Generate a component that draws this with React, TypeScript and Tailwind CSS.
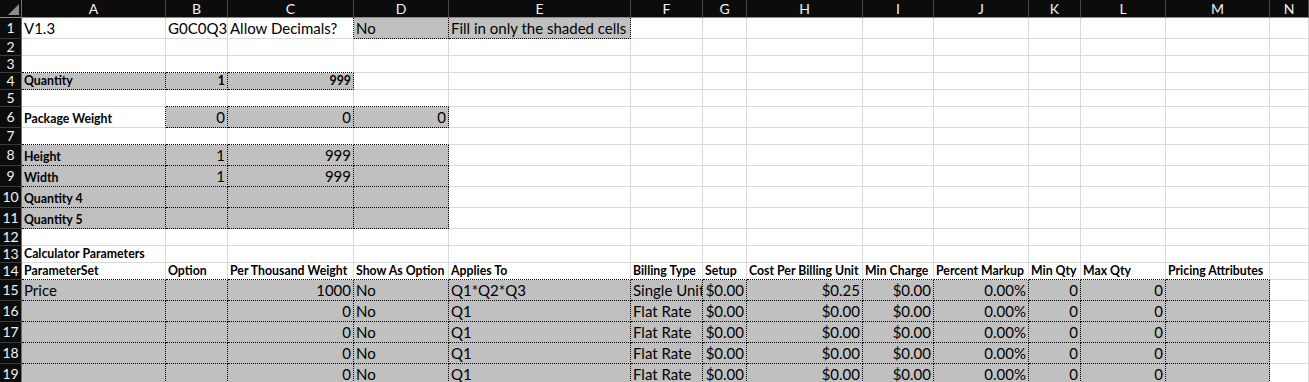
import React from "react";

type Cell = {
	text?: string;
	shaded?: boolean;
	right?: boolean;
	small?: boolean;
};

type Row = {
	num: number;
	tall: boolean;
	cells: Cell[];
};

const COLS = ["A", "B", "C", "D", "E", "F", "G", "H", "I", "J", "K", "L", "M", "N"];

const GRID =
	"grid grid-cols-[22px_144px_62px_126px_95px_182px_72px_44px_116px_71px_95px_52px_85px_104px_1fr]";

const blank = (n: number): Cell[] => Array.from({ length: n }, () => ({}));

const s = (text = "", right = false): Cell => ({ text, shaded: true, right });
const sb = (text = "", right = false): Cell => ({ text, shaded: true, right, small: true });
const b = (text: string): Cell => ({ text, small: true });

const paramRow = (a: string, c: string, e: string, f: string, h: string): Cell[] => [
	s(a),
	s(),
	s(c, true),
	s("No"),
	s(e),
	s(f),
	s("$0.00", true),
	s(h, true),
	s("$0.00", true),
	s("0.00%", true),
	s("0", true),
	s("0", true),
	s(),
	{},
];

const rows: Row[] = [
	{
		num: 1,
		tall: true,
		cells: [
			{ text: "V1.3" },
			{ text: "G0C0Q3" },
			{ text: "Allow Decimals?" },
			s("No"),
			s("Fill in only the shaded cells"),
			...blank(9),
		],
	},
	{ num: 2, tall: false, cells: blank(14) },
	{ num: 3, tall: false, cells: blank(14) },
	{ num: 4, tall: false, cells: [sb("Quantity"), sb("1", true), sb("999", true), ...blank(11)] },
	{ num: 5, tall: false, cells: blank(14) },
	{
		num: 6,
		tall: true,
		cells: [b("Package Weight"), s("0", true), s("0", true), s("0", true), ...blank(10)],
	},
	{ num: 7, tall: false, cells: blank(14) },
	{ num: 8, tall: true, cells: [sb("Height"), s("1", true), s("999", true), s(), ...blank(10)] },
	{ num: 9, tall: true, cells: [sb("Width"), s("1", true), s("999", true), s(), ...blank(10)] },
	{ num: 10, tall: true, cells: [sb("Quantity 4"), s(), s(), s(), ...blank(10)] },
	{ num: 11, tall: true, cells: [sb("Quantity 5"), s(), s(), s(), ...blank(10)] },
	{ num: 12, tall: false, cells: blank(14) },
	{ num: 13, tall: false, cells: [b("Calculator Parameters"), ...blank(13)] },
	{
		num: 14,
		tall: false,
		cells: [
			b("ParameterSet"),
			b("Option"),
			b("Per Thousand Weight"),
			b("Show As Option"),
			b("Applies To"),
			b("Billing Type"),
			b("Setup"),
			b("Cost Per Billing Unit"),
			b("Min Charge"),
			b("Percent Markup"),
			b("Min Qty"),
			b("Max Qty"),
			b("Pricing Attributes"),
			{},
		],
	},
	{ num: 15, tall: true, cells: paramRow("Price", "1000", "Q1*Q2*Q3", "Single Unit", "$0.25") },
	{ num: 16, tall: true, cells: paramRow("", "0", "Q1", "Flat Rate", "$0.00") },
	{ num: 17, tall: true, cells: paramRow("", "0", "Q1", "Flat Rate", "$0.00") },
	{ num: 18, tall: true, cells: paramRow("", "0", "Q1", "Flat Rate", "$0.00") },
	{ num: 19, tall: true, cells: paramRow("", "0", "Q1", "Flat Rate", "$0.00") },
];

const SheetCell: React.FC<{
	cell: Cell;
	dotRight: boolean;
	dotBottom: boolean;
}> = ({ cell, dotRight, dotBottom }) => {
	return (
		<div
			className={`flex items-end overflow-hidden whitespace-nowrap border-r border-b px-[2px] ${
				cell.shaded ? "bg-[#c0c0c0]" : "bg-white"
			} ${cell.right ? "justify-end" : "justify-start"} ${
				dotRight ? "border-r-black [border-right-style:dotted]" : "border-r-[#dadada]"
			} ${dotBottom ? "border-b-black [border-bottom-style:dotted]" : "border-b-[#dadada]"}`}
		>
			{cell.text && (
				<span
					className={
						cell.small
							? "pb-[1px] text-[12.3px] font-bold leading-[15px] text-black"
							: "pb-[1px] text-[15px] leading-[18px] text-black"
					}
				>
					{cell.text}
				</span>
			)}
		</div>
	);
};

export default function App() {
	return (
		<div className="w-[1309px] h-[382px] overflow-hidden bg-white font-['Lato',sans-serif]">
			<div className={`${GRID} h-[18px] bg-[#0c0c0c]`}>
				<div className="flex items-end justify-end border-r border-b border-r-[#6e6e6e] border-b-[#8a8a8a] pr-[2px] pb-[2px]">
					<svg width="11" height="11" viewBox="0 0 11 11">
						<polygon points="11,0 11,11 0,11" fill="#8c8c8c" />
					</svg>
				</div>
				{COLS.map((c) => (
					<div
						key={c}
						className="flex items-center justify-center border-r border-b border-r-[#4a4a4a] border-b-[#8a8a8a] text-[14px] leading-none text-[#f2f2f2]"
					>
						{c}
					</div>
				))}
			</div>
			{rows.map((row, ri) => {
				const below = rows[ri + 1];
				return (
					<div key={row.num} className={`${GRID} ${row.tall ? "h-[21px]" : "h-[17px]"}`}>
						<div className="flex items-center justify-center border-r border-b border-r-[#6e6e6e] border-b-[#3a3a3a] bg-[#0c0c0c] text-[14px] leading-none text-[#f2f2f2]">
							{row.num}
						</div>
						{row.cells.map((cell, ci) => {
							const next = row.cells[ci + 1];
							const down = below ? below.cells[ci] : undefined;
							return (
								<SheetCell
									key={ci}
									cell={cell}
									dotRight={!!cell.shaded || !!next?.shaded}
									dotBottom={!!cell.shaded || !!down?.shaded}
								/>
							);
						})}
					</div>
				);
			})}
		</div>
	);
}
